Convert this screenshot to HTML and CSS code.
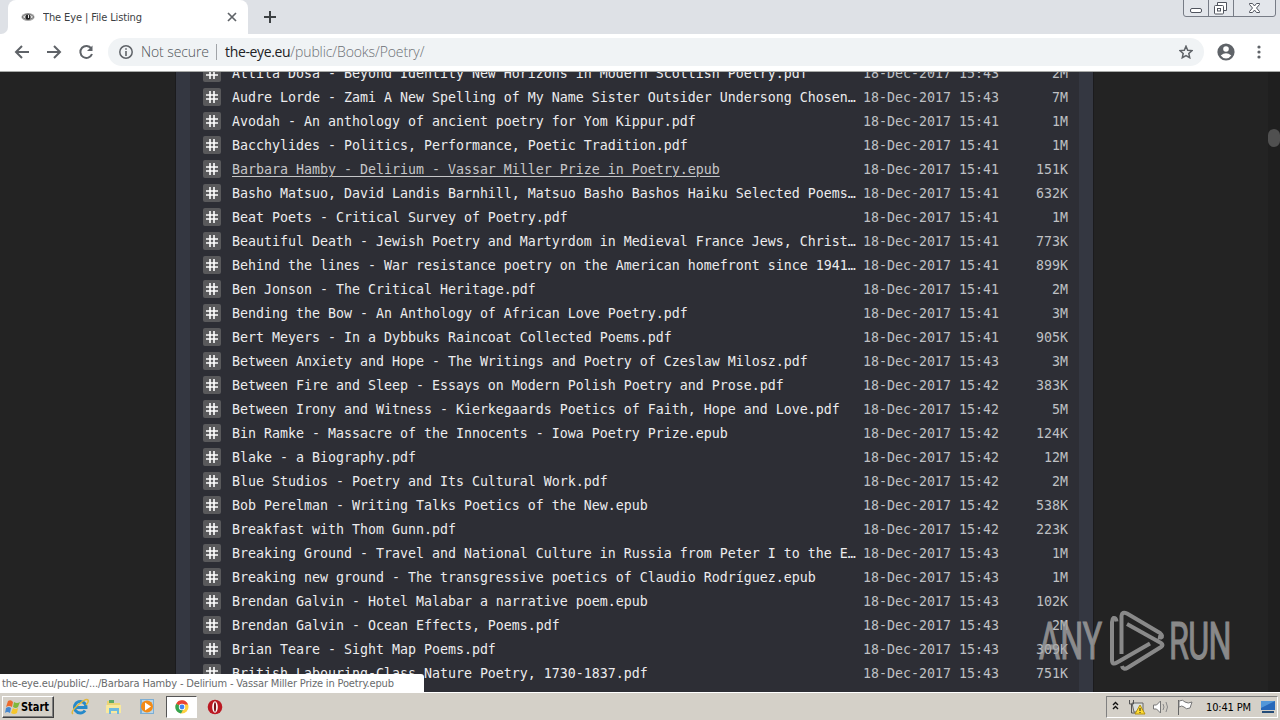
FILE: index.html
```html
<!DOCTYPE html>
<html lang="en">
<head>
<meta charset="utf-8">
<title>The Eye | File Listing</title>
<link rel="stylesheet" href="styles.css">
</head>
<body>
<svg class="defs" width="0" height="0"><defs>
<symbol id="hash" viewBox="0 0 18 18"><rect width="18" height="18" rx="2" fill="#59595b"/><path d="M7 3v12M11 3v12M3 7h12M3 11h12" stroke="#fff" stroke-width="1.6" fill="none"/></symbol>
</defs></svg>
<div class="desktop">
<header class="tabs">
  <div class="tab-edge"></div>
  <div class="tab">
    <svg class="favicon" width="14" height="10" viewBox="0 0 14 10"><ellipse cx="7" cy="5" rx="6.6" ry="4" fill="#aaa"/><path d="M1 5Q7-1 13 5Q7 10 1 5" fill="#ddd" stroke="#777"/><circle cx="7" cy="5" r="2.6" fill="#222"/><path d="M7 3h1v3H7z" fill="#eee"/></svg>
    <svg class="tab-title" width="110" height="16"><text x="0" y="12" textLength="99">The Eye | File Listing</text></svg>
    <svg class="tab-close" width="10" height="10" viewBox="0 0 10 10"><path d="M1 1l8 8M9 1L1 9" stroke="#5f6368" stroke-width="1.7"/></svg>
  </div>
  <svg class="plus" width="12" height="12" viewBox="0 0 12 12"><path d="M6 0v12M0 6h12" stroke="#3c4043" stroke-width="2"/></svg>
  <svg class="controls" width="94" height="18" viewBox="0 0 94 18"><path d="M.5 0V14Q.5 16.500 3 16.500H90Q92.500 16.500 92.500 14V0M25.500 0V16M50.500 0V16" fill="#e3e6eb" stroke="#777c86"/><rect x="7.500" y="8.500" width="11" height="4" rx="1.500" fill="#fff" stroke="#50545e"/><path d="M34.500 5.500V2.500H43.500V10.500H40.500" fill="#fff" stroke="#50545e"/><rect x="31.500" y="5.500" width="9" height="8.500" rx="1" fill="#fff" stroke="#50545e"/><rect x="34.500" y="8.500" width="3" height="2.500" fill="none" stroke="#50545e"/><path d="M66.500 3.500h3l2 2.500 2-2.500h3v1l-3 3.500 3 3.500v1h-3l-2-2.500-2 2.500h-3v-1l3-3.500-3-3.500z" fill="#fff" stroke="#50545e"/></svg>
</header>
<nav class="toolbar">
  <svg class="nav-icons" width="80" height="18" viewBox="0 0 80 18" fill="none" stroke="#5f6368" stroke-width="2"><path d="M15 9H2M8 3L2 9l6 6M33 9h13M40 3l6 6-6 6M77.300 5.500A6 6 0 1 0 78 11"/><path d="M78.500 2.500V8H73z" fill="#5f6368" stroke="none"/></svg>
  <div class="omnibox">
    <svg class="info" width="14" height="14" viewBox="0 0 14 14"><circle cx="7" cy="7" r="6.200" fill="none" stroke="#5f6368" stroke-width="1.500"/><path d="M7 6v5M7 3.200v1.600" stroke="#5f6368" stroke-width="1.600"/></svg>
    <span class="not-secure">Not secure</span><span class="separator"></span>
    <span class="url"><b>the-eye.eu</b>/public/Books/Poetry/</span>
    <svg class="star" width="14" height="14" viewBox="0 0 14 14"><path d="M7 1.200l1.700 4 4.300.4-3.200 2.900.9 4.200L7 10.500l-3.700 2.200.9-4.200L1 5.600l4.300-.4z" fill="none" stroke="#5f6368" stroke-width="1.500"/></svg>
  </div>
  <svg class="profile" width="18" height="18" viewBox="0 0 18 18"><circle cx="9" cy="9" r="8.600" fill="#5f6368"/><circle cx="9" cy="6" r="2.800" fill="#fff"/><path d="M3.700 12.500Q9 8 14.300 12.500Q12 15.600 9 15.600T3.700 12.500" fill="#fff"/></svg>
  <svg class="kebab" width="4" height="14" viewBox="0 0 4 14" fill="#5f6368"><circle cx="2" cy="2" r="1.600"/><circle cx="2" cy="7" r="1.600"/><circle cx="2" cy="12" r="1.600"/></svg>
</nav>
<main class="page">
  <section class="frame">
  <div class="listing">
    <div class="row"><svg><use href="#hash"/></svg><a>Attila Dosa - Beyond Identity New Horizons in Modern Scottish Poetry.pdf</a><time>18-Dec-2017 15:43</time><span>2M</span></div>
    <div class="row"><svg><use href="#hash"/></svg><a>Audre Lorde - Zami A New Spelling of My Name Sister Outsider Undersong Chosen…</a><time>18-Dec-2017 15:43</time><span>7M</span></div>
    <div class="row"><svg><use href="#hash"/></svg><a>Avodah - An anthology of ancient poetry for Yom Kippur.pdf</a><time>18-Dec-2017 15:41</time><span>1M</span></div>
    <div class="row"><svg><use href="#hash"/></svg><a>Bacchylides - Politics, Performance, Poetic Tradition.pdf</a><time>18-Dec-2017 15:41</time><span>1M</span></div>
    <div class="row"><svg><use href="#hash"/></svg><a class="hovered">Barbara Hamby - Delirium - Vassar Miller Prize in Poetry.epub</a><time>18-Dec-2017 15:41</time><span>151K</span></div>
    <div class="row"><svg><use href="#hash"/></svg><a>Basho Matsuo, David Landis Barnhill, Matsuo Basho Bashos Haiku Selected Poems…</a><time>18-Dec-2017 15:41</time><span>632K</span></div>
    <div class="row"><svg><use href="#hash"/></svg><a>Beat Poets - Critical Survey of Poetry.pdf</a><time>18-Dec-2017 15:41</time><span>1M</span></div>
    <div class="row"><svg><use href="#hash"/></svg><a>Beautiful Death - Jewish Poetry and Martyrdom in Medieval France Jews, Christ…</a><time>18-Dec-2017 15:41</time><span>773K</span></div>
    <div class="row"><svg><use href="#hash"/></svg><a>Behind the lines - War resistance poetry on the American homefront since 1941…</a><time>18-Dec-2017 15:41</time><span>899K</span></div>
    <div class="row"><svg><use href="#hash"/></svg><a>Ben Jonson - The Critical Heritage.pdf</a><time>18-Dec-2017 15:41</time><span>2M</span></div>
    <div class="row"><svg><use href="#hash"/></svg><a>Bending the Bow - An Anthology of African Love Poetry.pdf</a><time>18-Dec-2017 15:41</time><span>3M</span></div>
    <div class="row"><svg><use href="#hash"/></svg><a>Bert Meyers - In a Dybbuks Raincoat Collected Poems.pdf</a><time>18-Dec-2017 15:41</time><span>905K</span></div>
    <div class="row"><svg><use href="#hash"/></svg><a>Between Anxiety and Hope - The Writings and Poetry of Czeslaw Milosz.pdf</a><time>18-Dec-2017 15:43</time><span>3M</span></div>
    <div class="row"><svg><use href="#hash"/></svg><a>Between Fire and Sleep - Essays on Modern Polish Poetry and Prose.pdf</a><time>18-Dec-2017 15:42</time><span>383K</span></div>
    <div class="row"><svg><use href="#hash"/></svg><a>Between Irony and Witness - Kierkegaards Poetics of Faith, Hope and Love.pdf</a><time>18-Dec-2017 15:42</time><span>5M</span></div>
    <div class="row"><svg><use href="#hash"/></svg><a>Bin Ramke - Massacre of the Innocents - Iowa Poetry Prize.epub</a><time>18-Dec-2017 15:42</time><span>124K</span></div>
    <div class="row"><svg><use href="#hash"/></svg><a>Blake - a Biography.pdf</a><time>18-Dec-2017 15:42</time><span>12M</span></div>
    <div class="row"><svg><use href="#hash"/></svg><a>Blue Studios - Poetry and Its Cultural Work.pdf</a><time>18-Dec-2017 15:42</time><span>2M</span></div>
    <div class="row"><svg><use href="#hash"/></svg><a>Bob Perelman - Writing Talks Poetics of the New.epub</a><time>18-Dec-2017 15:42</time><span>538K</span></div>
    <div class="row"><svg><use href="#hash"/></svg><a>Breakfast with Thom Gunn.pdf</a><time>18-Dec-2017 15:42</time><span>223K</span></div>
    <div class="row"><svg><use href="#hash"/></svg><a>Breaking Ground - Travel and National Culture in Russia from Peter I to the E…</a><time>18-Dec-2017 15:43</time><span>1M</span></div>
    <div class="row"><svg><use href="#hash"/></svg><a>Breaking new ground - The transgressive poetics of Claudio Rodríguez.epub</a><time>18-Dec-2017 15:43</time><span>1M</span></div>
    <div class="row"><svg><use href="#hash"/></svg><a>Brendan Galvin - Hotel Malabar a narrative poem.epub</a><time>18-Dec-2017 15:43</time><span>102K</span></div>
    <div class="row"><svg><use href="#hash"/></svg><a>Brendan Galvin - Ocean Effects, Poems.pdf</a><time>18-Dec-2017 15:43</time><span>2M</span></div>
    <div class="row"><svg><use href="#hash"/></svg><a>Brian Teare - Sight Map Poems.pdf</a><time>18-Dec-2017 15:43</time><span>309K</span></div>
    <div class="row"><svg><use href="#hash"/></svg><a>British Labouring-Class Nature Poetry, 1730-1837.pdf</a><time>18-Dec-2017 15:43</time><span>751K</span></div>
  </div>
  </section>
  <div class="scrollbar"><div class="thumb"></div></div>
  <div class="status"><svg width="400" height="16"><text x="2" y="12" textLength="392">the-eye.eu/public/.../Barbara Hamby - Delirium - Vassar Miller Prize in Poetry.epub</text></svg></div>
  <svg class="watermark" width="200" height="72" viewBox="0 0 200 72">
    <g class="watermark-text"><text transform="translate(4 55) scale(.62 1)" textLength="102">ANY</text><text transform="translate(134 55) scale(.62 1)" textLength="101">RUN</text></g>
    <path d="M81.500 17.500Q81 13.500 78.500 14Q77 15 77 18V56Q77 61.500 82 58.500L115 39.500M86.500 50V12Q87 7 92 9.500L125 29Q128.500 32 126 33.500L123 33M92 20L126 39Q129 41 126 43L93 63.500Q88 66.500 87 62" fill="none" stroke="#a6a6a6" stroke-width="4" stroke-linejoin="round"/>
  </svg>
</main>
<footer class="taskbar">
  <button class="start"><svg width="16" height="16" viewBox="0 0 16 16"><path d="M3 2Q6 0 8 3L7 8Q4 6 1 8z" fill="#ed6a2c"/><path d="M9 3Q12 5 15 3L13 8Q11 10 8 8z" fill="#80b83b"/><path d="M1 9Q4 7 6 9L5 14Q2 12 0 14z" fill="#4587cf"/><path d="M8 9Q10 11 13 9L12 14Q9 16 6 14z" fill="#f6c62b"/></svg><svg width="30" height="16"><text x="0" y="12" textLength="28" lengthAdjust="spacingAndGlyphs">Start</text></svg></button>
  <div class="launchers">
    <svg width="18" height="18" viewBox="0 0 18 18"><path d="M14 12.500A5.800 5.800 0 1 1 15 9.500H5" fill="none" stroke="#2589ca" stroke-width="3"/><path d="M2 16Q-1 14 7 7T17 2Q18 4 15 7" fill="none" stroke="#e2b83c" stroke-width="1.500"/></svg>
    <svg width="18" height="18" viewBox="0 0 18 18"><path d="M2 3h5l2 2h6v10H2z" fill="#ecd475"/><path d="M4 2h5v3H4z" fill="#5eaa64"/><path d="M1 7h15v8H1z" fill="#f8e99d"/><path d="M4 10h10v6h-2v-3H6v3H4z" fill="#6eb9df"/></svg>
    <svg width="18" height="18" viewBox="0 0 18 18"><path d="M1 1h14v15H1z" fill="#7caed4"/><path d="M3 2h11v13H3z" fill="#b8d5e8"/><circle cx="8" cy="8.500" r="6" fill="#f28a16"/><path d="M6 4.500l6 4-6 4z" fill="#fff"/></svg>
  </div>
  <div class="active-app"><svg width="14" height="14" viewBox="0 0 14 14"><circle cx="7" cy="7" r="6.500" fill="#ffd141"/><path d="M7 7L1.200 3.800A6.500 6.500 0 0 1 13 4.500H7z" fill="#e94235"/><path d="M7 7L1.200 3.800A6.500 6.500 0 0 0 6 13.500L9 8z" fill="#34a451"/><circle cx="7" cy="7" r="3.200" fill="#fff"/><circle cx="7" cy="7" r="2.400" fill="#4285f4"/></svg></div>
  <svg class="opera" width="16" height="16" viewBox="0 0 16 16"><circle cx="8" cy="8" r="7.300" fill="#bb1923"/><ellipse cx="8" cy="8" rx="2.800" ry="5.800" fill="#fff"/><ellipse cx="8" cy="8" rx="1.100" ry="4.800" fill="#7a1218"/></svg>
  <div class="tray">
    <svg width="86" height="18" viewBox="0 0 86 18"><path d="M6 7l2.500-2.500L11 7M6 11l2.500-2.500L11 11" fill="none" stroke="#111" stroke-width="1.400"/><path d="M25 5h11v9H27z" fill="#dce0de" stroke="#666"/><path d="M22.500 2v4h4V2M24.500 6v9h4" fill="none" stroke="#555"/><path d="M33 7l5 9H28z" fill="#ffdb31" stroke="#b39013"/><path d="M33 10v3M33 14v1" stroke="#222"/><path d="M46.500 7h3l4-4v12l-4-4h-3z" fill="#fff" stroke="#777"/><path d="M56 6q2 3 0 6M59 4q3 5 0 10" fill="none" stroke="#888"/><path d="M71.500 2v15" stroke="#666"/><path d="M72 3q4-2 6 1 3 2 7 0l-2 6q-4 2-6-1-2-2-5 0z" fill="#fff" stroke="#777"/></svg>
    <svg class="clock" width="46" height="16"><text x="0" y="12" textLength="45">10:41 PM</text></svg>
    <svg class="desktop-icon" width="16" height="14" viewBox="0 0 16 14"><path d="M1 1h14v9H1z" fill="#2768ba"/><path d="M1 1h14L1 8z" fill="#5297d9"/><path d="M2 12h12" stroke="#254c78" stroke-width="2"/></svg>
  </div>
</footer>
</div>
</body>
</html>
```
FILE: styles.css
```css
* { box-sizing: border-box; }
body { margin: 0; overflow: hidden; font-family: "Noto Sans", sans-serif; }
.defs { position: absolute; }
.desktop { display: flex; flex-direction: column; width: 1280px; height: 720px; overflow: hidden; }
svg { flex: none; }
.tabs { display: flex; height: 34px; flex: none; background: #dee1e6; }
.tab-edge { width: 8px; background: #dee1e6; border-bottom-right-radius: 7px; box-shadow: 0 8px 0 #fff; }
.tab { display: flex; align-items: center; width: 240px; height: 34px; padding: 0 11px 0 13px; background: #fff; border-radius: 8px 8px 0 0; }
.tab-title { margin-left: 8px; }
.tab-title text { font: 11px "DejaVu Sans Condensed", "DejaVu Sans", sans-serif; fill: #3c4043; }
.tab-close { margin-left: auto; }
.plus { margin: 11px 0 0 16px; }
.controls { margin-left: auto; margin-right: 3px; }
.toolbar { display: flex; align-items: center; flex: none; height: 38px; padding: 0 19px 2px 14px; background: #fff; border-bottom: 1px solid #a8aaa8; }
.omnibox { display: flex; align-items: center; width: 1096px; height: 28px; margin-left: 14px; padding: 0 11px; border-radius: 14px; background: #f0f3f5; }
.not-secure { margin-left: 8px; width: 67px; font: 300 14px "Open Sans", sans-serif; letter-spacing: -.1px; color: #4f5358; white-space: nowrap; }
.separator { width: 1px; height: 16px; margin: 0 8px; background: #a1a4a8; }
.url { font: 300 14px "Open Sans", sans-serif; color: #6b6f74; letter-spacing: -.1px; }
.url b { font-weight: 400; color: #202124; letter-spacing: -.35px; }
.star { margin-left: auto; }
.profile { margin-left: 13px; }
.kebab { margin-left: auto; }
.page { position: relative; display: flex; flex: none; height: 620px; overflow: hidden; background: #232323; }
.frame { width: 919px; height: 620px; margin-left: 175px; padding: 0 14px; background: #343741; border: solid #1b1b1d; border-width: 0 1px; }
.listing { height: 100%; overflow: hidden; background: #2d2e35; padding: 0 11px 0 13px; }
.row { display: flex; align-items: center; height: 24px; color: #bfc0c4; font: 13.29px/24px "DejaVu Sans Mono", monospace; white-space: pre; }
.row:first-child { margin-top: -11px; }
.row svg { width: 18px; height: 18px; }
.row a, .row time, .row span { padding-top: 2px; }
.row a { width: 625px; margin-left: 11px; color: #ececee; }
.row .hovered { color: #c6c6c8; text-decoration: underline; text-underline-offset: 2px; }
.row time { margin-left: 6px; }
.row span { margin-left: auto; }
.scrollbar { width: 12px; margin-left: auto; background: #1f1f1f; padding-top: 57px; }
.thumb { height: 18px; border-radius: 6px; background: #505050; }
.status { position: absolute; left: 0; bottom: 0; width: 424px; height: 18px; padding-top: 1px; background: #fff; border-top-right-radius: 3px; }
.status svg { display: block; }
.status text { font: 11px "DejaVu Sans Condensed", "DejaVu Sans", sans-serif; fill: #696b6d; }
.watermark { position: absolute; left: 1035px; top: 532px; opacity: .78; }
.watermark-text { font: 400 52px Roboto, sans-serif; fill: #a6a6a6; stroke: #a6a6a6; stroke-width: 1.2px; }
.taskbar { display: flex; align-items: center; height: 28px; flex: none; padding: 0 2px; background: #d4d0c8; border-top: 1px solid #fff; }
.start { display: flex; align-items: center; gap: 0; width: 52px; height: 22px; padding: 0 2px; background: #d4d0c8; border: 1px solid; border-color: #fff #404040 #404040 #fff; box-shadow: inset -1px -1px #808080; }
.start text { font: bold 11.5px "DejaVu Sans Condensed", "DejaVu Sans", sans-serif; fill: #000; }
.launchers { display: flex; gap: 16px; margin-left: 17px; }
.active-app { display: flex; align-items: center; justify-content: center; width: 31px; height: 22px; margin-left: 9px; background: #fff; border: 1px solid; border-color: #555 #fff #fff #555; }
.opera { margin-left: 10px; }
.tray { display: flex; align-items: center; width: 172px; height: 22px; margin-left: auto; border: 1px solid; border-color: #808080 #fff #fff #808080; }
.clock { margin-left: 13px; }
.clock text { font: 11px "DejaVu Sans Condensed", "DejaVu Sans", sans-serif; fill: #000; }
.desktop-icon { margin-left: 8px; }
```
